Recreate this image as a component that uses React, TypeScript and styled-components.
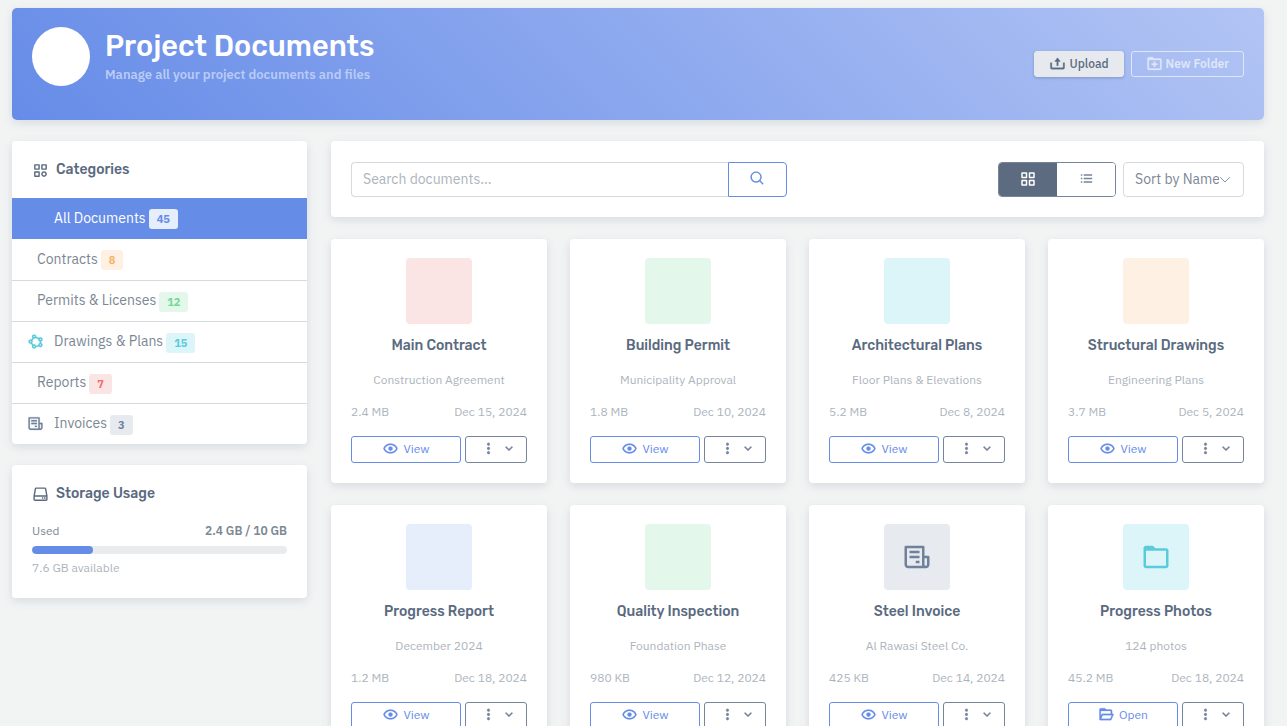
import React from "react";
import styled, { createGlobalStyle, css } from "styled-components";
import {
  BiCategory,
  BiChevronDown,
  BiDotsVerticalRounded,
  BiFolder,
  BiFolderOpen,
  BiFolderPlus,
  BiGridAlt,
  BiHdd,
  BiListUl,
  BiReceipt,
  BiSearch,
  BiShapePolygon,
  BiShow,
  BiUpload,
} from "react-icons/bi";

const color = {
  primary: "#658ce7",
  heading: "#5a6a7f",
  body: "#7b8794",
  muted: "#adb4bd",
  border: "#d6dade",
  slate: "#75859b",
};

type Tone = "primary" | "warning" | "success" | "info" | "danger" | "secondary";

const tones: Record<Tone, { bg: string; fg: string }> = {
  primary: { bg: "#e6edfb", fg: "#658ce7" },
  warning: { bg: "#fef0e2", fg: "#f2b467" },
  success: { bg: "#e3f7eb", fg: "#74d798" },
  info: { bg: "#dcf5f9", fg: "#5acbdb" },
  danger: { bg: "#fbe5e4", fg: "#ec6f6f" },
  secondary: { bg: "#e7eaef", fg: "#70819a" },
};

const GlobalStyle = createGlobalStyle`
  *, *::before, *::after { box-sizing: border-box; }
  html { scrollbar-width: none; }
  body {
    margin: 0;
    background: #f2f4f4;
    color: ${color.body};
    font: 400 14px/20px "IBM Plex Sans", Roboto, "Liberation Sans", sans-serif;
  }
  h1, h2, h3, p, ul { margin: 0; padding: 0; }
  button, input, select { font: inherit; }
  button { cursor: pointer; }
`;

const Page = styled.main`
  display: flex;
  flex-direction: column;
  gap: 21px;
  padding: 8px 23px 22px 12px;
`;

const surface = css`
  background: #fff;
  border-radius: 4px;
  box-shadow: 0 3px 10px rgba(72, 92, 118, 0.16);
`;

const Banner = styled.header`
  display: flex;
  align-items: center;
  justify-content: space-between;
  min-height: 112px;
  padding: 19px 20px;
  border-radius: 5px;
  background: linear-gradient(45deg, #668ce8, #b2c4f4);
  box-shadow: 0 3px 10px rgba(72, 92, 118, 0.16);
`;

const BannerIntro = styled.div`
  display: flex;
  align-self: flex-start;
  gap: 15px;
`;

const Avatar = styled.div`
  width: 58px;
  height: 59px;
  border-radius: 50%;
  background: #fff;
`;

const BannerTitle = styled.h1`
  color: #fff;
  font: 500 29px/38px Rubik, Inter, sans-serif;
`;

const BannerText = styled.p`
  color: #b9cbf6;
  font-size: 13px;
  font-weight: 600;
`;

const BannerActions = styled.div`
  display: flex;
  gap: 7px;
`;

const BannerButton = styled.button<{ $outline?: boolean }>`
  display: flex;
  align-items: center;
  justify-content: center;
  gap: 3px;
  height: 26px;
  padding: 0 14px;
  border: 1px solid ${(p) => (p.$outline ? "#dfe6f7" : "#e6eaee")};
  border-radius: 3px;
  background: ${(p) => (p.$outline ? "transparent" : "#e6eaee")};
  color: ${(p) => (p.$outline ? "#dfe6f7" : color.heading)};
  box-shadow: ${(p) => (p.$outline ? "none" : "0 1px 3px rgba(60, 80, 120, 0.35)")};
  font-size: 12px;
  font-weight: ${(p) => (p.$outline ? 600 : 500)};
  white-space: nowrap;
  & > svg {
    margin-bottom: 2px;
    stroke: currentColor;
    stroke-width: 0.5px;
  }
`;

const Columns = styled.div`
  display: grid;
  grid-template-columns: repeat(12, minmax(0, 1fr));
  gap: 24px;
  align-items: start;
`;

const Sidebar = styled.aside`
  grid-column: span 3;
  display: flex;
  flex-direction: column;
  gap: 21px;
`;

const Content = styled.section`
  grid-column: span 9;
  display: flex;
  flex-direction: column;
  gap: 22px;
`;

const Panel = styled.section`
  ${surface}
  overflow: hidden;
`;

const PanelTitle = styled.h2`
  display: flex;
  align-items: center;
  gap: 7px;
  padding: 19px 20px 18px;
  color: ${color.heading};
  font: 500 14px/20px Rubik, Inter, sans-serif;
`;

const CategoryList = styled.ul`
  list-style: none;
`;

const CategoryItem = styled.li`
  height: 41px;
  & + & + & {
    border-top: 1px solid ${color.border};
  }
`;

const CategoryLink = styled.a<{ $active?: boolean }>`
  display: flex;
  align-items: center;
  height: 100%;
  padding: 0 15px 2px;
  background: ${(p) => (p.$active ? color.primary : "transparent")};
  color: ${(p) => (p.$active ? "#fff" : color.body)};
  text-decoration: none;
`;

const CategoryIcon = styled.span<{ $tone: Tone; $reserved: boolean }>`
  display: flex;
  width: ${(p) => (p.$reserved ? "17px" : "0")};
  margin-right: 10px;
  color: ${(p) => tones[p.$tone].fg};
  & > svg {
    flex: none;
    stroke: currentColor;
    stroke-width: 0.3px;
  }
`;

const Badge = styled.span<{ $tone: Tone }>`
  margin: 3px 0 0 3px;
  padding: 0 8px;
  border-radius: 3px;
  background: ${(p) => tones[p.$tone].bg};
  color: ${(p) => tones[p.$tone].fg};
  font-size: 11px;
  font-weight: 700;
`;

const StorageBody = styled.div`
  padding: 0 20px 21px;
  font-size: 12px;
  line-height: 18px;
`;

const Split = styled.div`
  display: flex;
  justify-content: space-between;
`;

const Used = styled(Split)`
  & > strong {
    font-weight: 600;
  }
`;

const Meter = styled.div`
  height: 8px;
  margin: 6px 0 5px;
  border-radius: 4px;
  background: #e9ebed;
  overflow: hidden;
`;

const MeterFill = styled.div`
  height: 100%;
  border-radius: 4px;
  background: ${color.primary};
`;

const Muted = styled.span`
  color: ${color.muted};
`;

const Toolbar = styled.div`
  ${surface}
  display: grid;
  grid-template-columns: 1fr 1fr;
  gap: 21px;
  padding: 21px 20px 20px;
`;

const SearchForm = styled.form`
  display: flex;
`;

const SearchInput = styled.input`
  flex: 1;
  min-width: 0;
  height: 35px;
  padding: 0 11px 2px;
  border: 1px solid ${color.border};
  border-right: 0;
  border-radius: 4px 0 0 4px;
  background: #fff;
  color: ${color.body};
  &::placeholder {
    color: ${color.muted};
    opacity: 1;
  }
`;

const SearchButton = styled.button`
  display: grid;
  place-items: center;
  width: 59px;
  padding: 0 0 2px;
  border: 1px solid ${color.primary};
  border-radius: 0 4px 4px 0;
  background: #fff;
  color: ${color.primary};
`;

const ViewControls = styled.div`
  display: flex;
  justify-content: flex-end;
  gap: 7px;
`;

const Toggle = styled.div`
  display: flex;
  border: 1px solid ${color.slate};
  border-radius: 4px;
  overflow: hidden;
`;

const ToggleButton = styled.button<{ $active?: boolean }>`
  display: grid;
  place-items: center;
  width: 58px;
  padding: 0 0 2px;
  border: 0;
  background: ${(p) => (p.$active ? "#5c6b80" : "#fff")};
  color: ${(p) => (p.$active ? "#fff" : color.slate)};
`;

const SortBox = styled.div`
  display: grid;
  align-items: center;
  width: 121px;
  height: 35px;
  border: 1px solid ${color.border};
  border-radius: 4px;
  & > * {
    grid-area: 1 / 1;
  }
  & > svg {
    justify-self: end;
    margin-right: 12px;
    pointer-events: none;
  }
`;

const SortSelect = styled.select`
  appearance: none;
  width: 100%;
  height: 100%;
  padding: 0 24px 2px 11px;
  border: 0;
  background: transparent;
  color: ${color.body};
`;

const Cards = styled.div`
  display: grid;
  grid-template-columns: repeat(4, minmax(0, 1fr));
  gap: 22px 23px;
`;

const Card = styled.article`
  ${surface}
  display: flex;
  flex-direction: column;
  padding: 19px 20px 20px;
`;

const Thumb = styled.div<{ $tone: Tone }>`
  display: grid;
  place-items: center;
  align-self: center;
  width: 66px;
  height: 66px;
  border-radius: 4px;
  background: ${(p) => tones[p.$tone].bg};
  color: ${(p) => tones[p.$tone].fg};
`;

const CardTitle = styled.h3`
  margin-top: 12px;
  color: ${color.heading};
  font: 500 14px/20px Rubik, Inter, sans-serif;
  text-align: center;
`;

const CardText = styled.p`
  margin-top: 16px;
  color: ${color.muted};
  font-size: 12px;
  line-height: 16px;
  text-align: center;
`;

const CardMeta = styled(Split)`
  margin: 16px 0;
  color: ${color.muted};
  font-size: 12px;
  line-height: 16px;
`;

const CardActions = styled.div`
  display: flex;
  gap: 4px;
`;

const ActionButton = styled.button<{ $menu?: boolean }>`
  display: flex;
  flex: ${(p) => (p.$menu ? "0 0 62px" : "1")};
  align-items: center;
  justify-content: center;
  gap: 4px;
  height: 27px;
  padding: ${(p) => (p.$menu ? "0 0 2px 4px" : "0 0 1px")};
  border: 1px solid ${(p) => (p.$menu ? color.slate : color.primary)};
  border-radius: 3px;
  background: #fff;
  color: ${(p) => (p.$menu ? color.slate : color.primary)};
  font-size: 12px;
  & > svg {
    margin-bottom: 1px;
    stroke: currentColor;
    stroke-width: 0.3px;
  }
`;

type Category = {
  name: string;
  count: number;
  tone: Tone;
  reserved?: boolean;
  active?: boolean;
  icon?: React.ReactNode;
};

const categories: Category[] = [
  { name: "All Documents", count: 45, tone: "primary", reserved: true, active: true },
  { name: "Contracts", count: 8, tone: "warning" },
  { name: "Permits & Licenses", count: 12, tone: "success" },
  { name: "Drawings & Plans", count: 15, tone: "info", reserved: true, icon: <BiShapePolygon size={17} /> },
  { name: "Reports", count: 7, tone: "danger" },
  { name: "Invoices", count: 3, tone: "secondary", reserved: true, icon: <BiReceipt size={17} /> },
];

type Doc = {
  title: string;
  text: string;
  size: string;
  date: string;
  tone: Tone;
  icon?: React.ReactNode;
  folder?: boolean;
};

const docs: Doc[] = [
  { title: "Main Contract", text: "Construction Agreement", size: "2.4 MB", date: "Dec 15, 2024", tone: "danger" },
  { title: "Building Permit", text: "Municipality Approval", size: "1.8 MB", date: "Dec 10, 2024", tone: "success" },
  { title: "Architectural Plans", text: "Floor Plans & Elevations", size: "5.2 MB", date: "Dec 8, 2024", tone: "info" },
  { title: "Structural Drawings", text: "Engineering Plans", size: "3.7 MB", date: "Dec 5, 2024", tone: "warning" },
  { title: "Progress Report", text: "December 2024", size: "1.2 MB", date: "Dec 18, 2024", tone: "primary" },
  { title: "Quality Inspection", text: "Foundation Phase", size: "980 KB", date: "Dec 12, 2024", tone: "success" },
  { title: "Steel Invoice", text: "Al Rawasi Steel Co.", size: "425 KB", date: "Dec 14, 2024", tone: "secondary", icon: <BiReceipt size={30} /> },
  { title: "Progress Photos", text: "124 photos", size: "45.2 MB", date: "Dec 18, 2024", tone: "info", icon: <BiFolder size={30} />, folder: true },
];

export default function App() {
  return (
    <>
      <GlobalStyle />
      <Page>
        <Banner>
          <BannerIntro>
            <Avatar />
            <div>
              <BannerTitle>Project Documents</BannerTitle>
              <BannerText>Manage all your project documents and files</BannerText>
            </div>
          </BannerIntro>
          <BannerActions>
            <BannerButton type="button">
              <BiUpload size={17} />
              Upload
            </BannerButton>
            <BannerButton type="button" $outline>
              <BiFolderPlus size={17} />
              New Folder
            </BannerButton>
          </BannerActions>
        </Banner>
        <Columns>
          <Sidebar>
            <Panel>
              <PanelTitle>
                <BiCategory size={17} />
                Categories
              </PanelTitle>
              <CategoryList>
                {categories.map((c) => (
                  <CategoryItem key={c.name}>
                    <CategoryLink href="#" $active={c.active}>
                      <CategoryIcon $tone={c.tone} $reserved={!!c.reserved}>
                        {c.icon}
                      </CategoryIcon>
                      {c.name}
                      <Badge $tone={c.tone}>{c.count}</Badge>
                    </CategoryLink>
                  </CategoryItem>
                ))}
              </CategoryList>
            </Panel>
            <Panel>
              <PanelTitle>
                <BiHdd size={17} />
                Storage Usage
              </PanelTitle>
              <StorageBody>
                <Used>
                  <span>Used</span>
                  <strong>2.4 GB / 10 GB</strong>
                </Used>
                <Meter>
                  <MeterFill style={{ width: `${(2.4 / 10) * 100}%` }} />
                </Meter>
                <Muted>7.6 GB available</Muted>
              </StorageBody>
            </Panel>
          </Sidebar>
          <Content>
            <Toolbar>
              <SearchForm role="search">
                <SearchInput type="text" placeholder="Search documents..." aria-label="Search documents" />
                <SearchButton type="button" aria-label="Search">
                  <BiSearch size={17} />
                </SearchButton>
              </SearchForm>
              <ViewControls>
                <Toggle>
                  <ToggleButton type="button" $active aria-label="Grid view">
                    <BiGridAlt size={18} />
                  </ToggleButton>
                  <ToggleButton type="button" aria-label="List view">
                    <BiListUl size={17} />
                  </ToggleButton>
                </Toggle>
                <SortBox>
                  <SortSelect aria-label="Sort documents" defaultValue="name">
                    <option value="name">Sort by Name</option>
                    <option value="date">Sort by Date</option>
                    <option value="size">Sort by Size</option>
                  </SortSelect>
                  <svg width="12" height="8" viewBox="0 0 12 8" fill="none" stroke="#8a95a2" strokeLinecap="round">
                    <path d="M1.5 1.500 6 6l4.500-4.500" />
                  </svg>
                </SortBox>
              </ViewControls>
            </Toolbar>
            <Cards>
              {docs.map((d) => (
                <Card key={d.title}>
                  <Thumb $tone={d.tone}>{d.icon}</Thumb>
                  <CardTitle>{d.title}</CardTitle>
                  <CardText>{d.text}</CardText>
                  <CardMeta>
                    <span>{d.size}</span>
                    <span>{d.date}</span>
                  </CardMeta>
                  <CardActions>
                    <ActionButton type="button">
                      {d.folder ? <BiFolderOpen size={17} /> : <BiShow size={17} />}
                      {d.folder ? "Open" : "View"}
                    </ActionButton>
                    <ActionButton type="button" $menu aria-label={`More actions for ${d.title}`}>
                      <BiDotsVerticalRounded size={17} />
                      <BiChevronDown size={16} />
                    </ActionButton>
                  </CardActions>
                </Card>
              ))}
            </Cards>
          </Content>
        </Columns>
      </Page>
    </>
  );
}
